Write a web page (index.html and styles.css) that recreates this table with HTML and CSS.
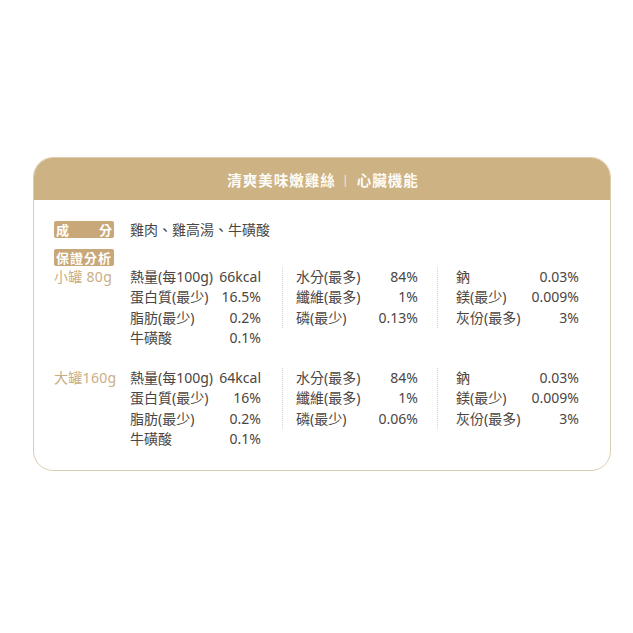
FILE: index.html
```html
<!DOCTYPE html>
<html lang="zh-Hant">
<head>
<meta charset="utf-8">
<link rel="stylesheet" href="styles.css">
</head>
<body>
<div class="card">
  <div class="header">清爽美味嫩雞絲<span class="bar">|</span>心臟機能</div>
  <div class="content">
    <div class="ingr">
      <div class="tag tag-split"><span>成</span><span>分</span></div>
      <div class="ingr-text">雞肉、雞高湯、牛磺酸</div>
    </div>
    <div class="tag tag-title">保證分析</div>

    <div class="block">
      <div class="size">小罐 80g</div>
      <div class="col c1">
        <span>熱量(每100g)</span><span class="v">66kcal</span>
        <span>蛋白質(最少)</span><span class="v">16.5%</span>
        <span>脂肪(最少)</span><span class="v">0.2%</span>
        <span>牛磺酸</span><span class="v">0.1%</span>
      </div>
      <div class="col c2">
        <span>水分(最多)</span><span class="v">84%</span>
        <span>纖維(最多)</span><span class="v">1%</span>
        <span>磷(最少)</span><span class="v">0.13%</span>
      </div>
      <div class="col c3">
        <span>鈉</span><span class="v">0.03%</span>
        <span>鎂(最少)</span><span class="v">0.009%</span>
        <span>灰份(最多)</span><span class="v">3%</span>
      </div>
    </div>

    <div class="block block2">
      <div class="size">大罐160g</div>
      <div class="col c1">
        <span>熱量(每100g)</span><span class="v">64kcal</span>
        <span>蛋白質(最少)</span><span class="v">16%</span>
        <span>脂肪(最少)</span><span class="v">0.2%</span>
        <span>牛磺酸</span><span class="v">0.1%</span>
      </div>
      <div class="col c2">
        <span>水分(最多)</span><span class="v">84%</span>
        <span>纖維(最多)</span><span class="v">1%</span>
        <span>磷(最少)</span><span class="v">0.06%</span>
      </div>
      <div class="col c3">
        <span>鈉</span><span class="v">0.03%</span>
        <span>鎂(最少)</span><span class="v">0.009%</span>
        <span>灰份(最多)</span><span class="v">3%</span>
      </div>
    </div>
  </div>
</div>
</body>
</html>
```

FILE: styles.css
```css
* { box-sizing: border-box; }
html, body { margin: 0; padding: 0; background: #ffffff; }
body {
  font-family: "Noto Sans", "Noto Sans CJK TC", sans-serif;
  color: #4a4644;
  padding: 157px 0 0 33px;
}
.card {
  width: 578px;
  height: 314px;
  border: 1.5px solid #dccdb0;
  border-radius: 20px;
  overflow: hidden;
  background: #fff;
}
.header {
  height: 42px;
  background: #cdb283;
  color: #fdfbf6;
  font-family: "Noto Sans CJK TC", sans-serif;
  font-size: 14.5px;
  font-weight: 700;
  letter-spacing: 1px;
  display: flex;
  align-items: center;
  justify-content: center;
  padding-left: 2px;
}
.header .bar {
  font-weight: 400;
  font-size: 11px;
  margin: 0 9px 0 8px;
  opacity: 0.9;
}
.content {
  padding: 19px 0 0 20px;
}
.ingr {
  display: flex;
  align-items: center;
  height: 20px;
}
.tag {
  width: 60px;
  height: 17px;
  background: #c8a878;
  color: #fff;
  font-family: "Noto Sans CJK TC", sans-serif;
  font-size: 13px;
  font-weight: 700;
  line-height: 17px;
  border-radius: 2px;
  padding: 0 2px;
}
.tag-split {
  display: flex;
  justify-content: space-between;
}
.tag-title {
  margin-top: 10px;
  letter-spacing: 1px;
}
.ingr-text {
  margin-left: 16px;
  font-size: 14px;
}
.block {
  display: flex;
  align-items: flex-start;
  font-size: 14px;
  line-height: 20.3px;
  margin-top: 1px;
}
.block2 { margin-top: 20px; }
.size {
  width: 76px;
  color: #c9ae84;
  letter-spacing: 0.3px;
}
.col {
  display: grid;
  grid-template-columns: auto auto;
  justify-content: space-between;
}
.col .v { text-align: right; }
.c1 { width: 131px; }
.c2 {
  margin-left: 21px;
  border-left: 1px dotted #d9d2c4;
  padding-left: 13px;
  width: 136px;
}
.c3 {
  margin-left: 19px;
  border-left: 1px dotted #d9d2c4;
  padding-left: 18px;
  width: 142px;
}
```
